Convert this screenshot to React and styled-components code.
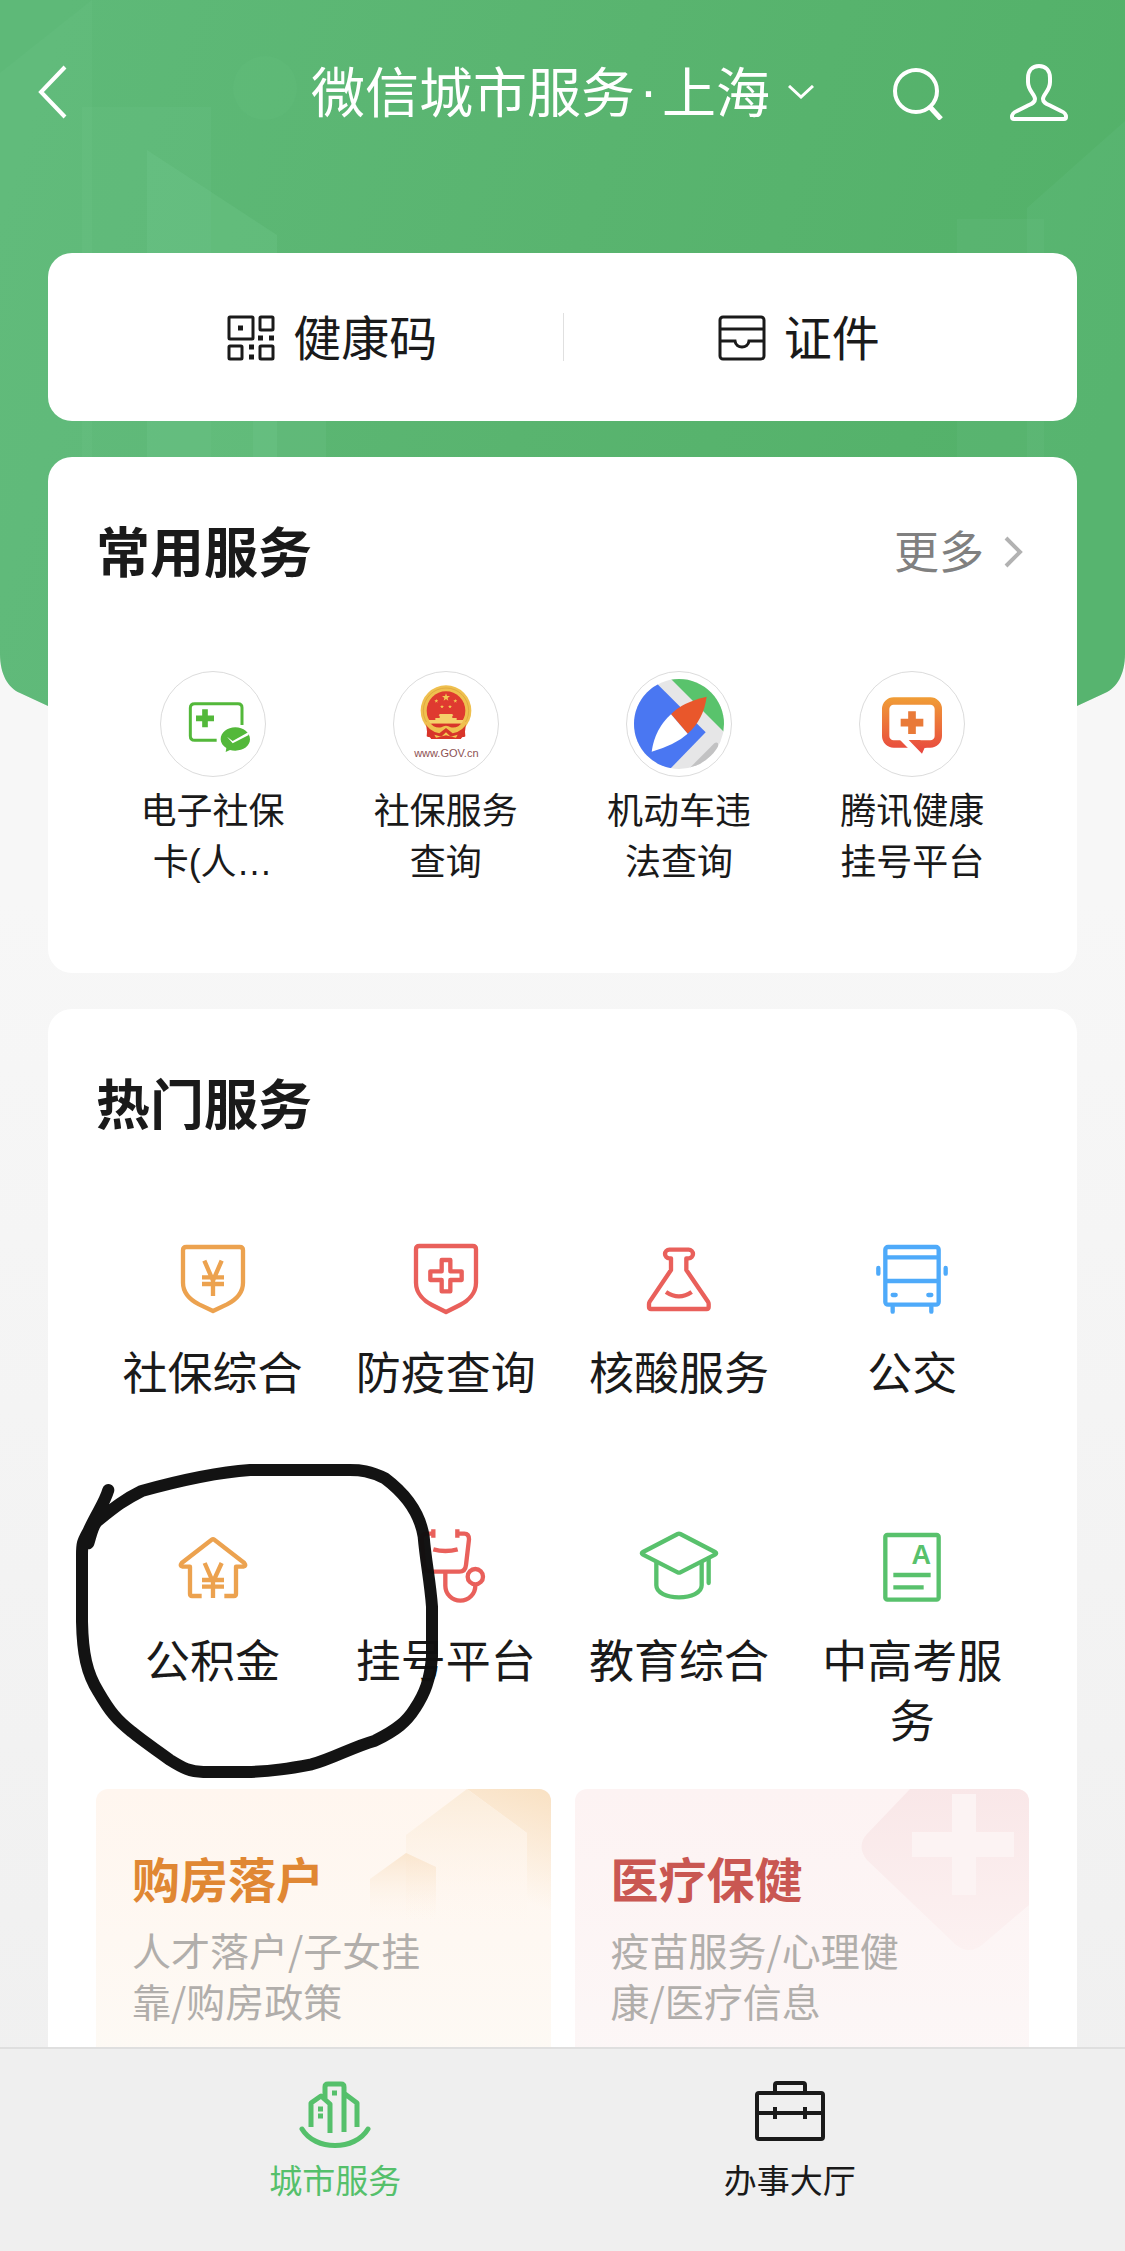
import React from 'react';
import styled, { createGlobalStyle } from 'styled-components';


const GlobalStyle = createGlobalStyle`
  * {
    box-sizing: border-box;
  }

  body {
    margin: 0;
    background: #f0f0f0;
    color: #1a1a1a;
    font-family: "Noto Sans CJK SC", "Noto Sans", sans-serif;
  }

  h1, h2, h3, p, ul {
    margin: 0;
    padding: 0;
  }

  button {
    padding: 0;
    border: 0;
    background: none;
    color: inherit;
    font: inherit;
    cursor: pointer;
  }

  a {
    color: inherit;
    text-decoration: none;
  }

  svg {
    display: block;
    flex: none;
  }
`;

const Page = styled.div`
  position: relative;
  display: flex;
  flex-direction: column;
  height: 100vh;
  overflow: hidden;
  background: linear-gradient(#f7f7f7 40%, #efefef);
`;

const Backdrop = styled.svg`
  position: absolute;
  top: 0;
  left: 0;
  width: 100%;
  height: 720px;
`;

const Scroll = styled.main`
  position: relative;
  flex: 1;
  min-height: 0;
  overflow: hidden;
  padding: 0 48px;
`;

const Header = styled.header`
  display: grid;
  grid-template-columns: 1fr auto 1fr;
  align-items: center;
  height: 184px;
  margin-bottom: 69px;
  color: #fff;
`;

const BackButton = styled.button`
  justify-self: start;
  margin-left: -12px;
`;

const CityButton = styled.button`
  display: flex;
  align-items: center;
  gap: 18px;
`;

const PageTitle = styled.h1`
  display: flex;
  padding-bottom: 5px;
  font-size: 54px;
  font-weight: 400;
  line-height: 72px;
`;

const Dot = styled.span`
  width: 27px;
  font-family: "Liberation Sans", sans-serif;
  text-align: center;
`;

const Actions = styled.div`
  display: flex;
  align-items: center;
  justify-content: flex-end;
  gap: 66px;
  padding-right: 8px;
`;

const Card = styled.section`
  position: relative;
  margin-bottom: 36px;
  border-radius: 24px;
  background: #fff;
`;

const QuickCard = styled(Card)`
  display: flex;
  align-items: center;
  height: 168px;
  padding: 0 48px;
`;

const QuickLink = styled.a`
  flex: 1;
  display: flex;
  align-items: center;
  justify-content: center;
  gap: 18px;
  padding-left: 6px;
  font-size: 48px;
  line-height: 72px;

  & + & {
    background: linear-gradient(#e0e0e0, #e0e0e0) left center / 1px 48px no-repeat;
  }
`;

const QuickLabel = styled.span`
  padding-bottom: 5px;
`;

const CommonCard = styled(Card)`
  height: 516px;
  padding: 0 48px;
`;

const HotCard = styled(Card)`
  padding: 0 48px 60px;
`;

const CardHead = styled.div`
  display: flex;
  align-items: center;
  justify-content: space-between;
  height: 190px;
`;

const CardTitle = styled.h2`
  padding-bottom: 4px;
  font-size: 54px;
  font-weight: 700;
  line-height: 72px;
`;

const MoreLink = styled.a`
  display: flex;
  align-items: center;
  gap: 18px;
  padding-right: 3px;
  color: #808080;
  font-size: 45px;
  line-height: 60px;
`;

const MoreLabel = styled.span`
  padding-bottom: 4px;
`;

const Grid = styled.ul`
  display: grid;
  grid-template-columns: repeat(4, 1fr);
  list-style: none;
`;

const CommonGrid = styled(Grid)`
  padding-top: 24px;
`;

const HotGrid = styled(Grid)`
  row-gap: 121px;
  padding: 35px 0 40px;
`;

/* the Latin face comes first so that the ellipsis sits on the baseline */
const CommonItem = styled.a`
  display: flex;
  flex-direction: column;
  align-items: center;
  gap: 9px;
  font-family: "Liberation Sans", "Noto Sans CJK SC", sans-serif;
  font-size: 36px;
  line-height: 51px;
  text-align: center;
`;

const Round = styled.span`
  width: 106px;
  height: 106px;
  border: 1px solid #dcdcdc;
  border-radius: 50%;
  overflow: hidden;
`;

const CommonLabel = styled.span`
  width: 150px;
`;

const HotItem = styled.a`
  display: flex;
  flex-direction: column;
  align-items: center;
  gap: 17px;
  padding: 0 12px;
  font-size: 45px;
  line-height: 60px;
  text-align: center;
`;

const Features = styled.div`
  display: grid;
  grid-template-columns: 1fr 1fr;
  gap: 24px;
`;

const Feature = styled.a`
  position: relative;
  height: 300px;
  padding: 52px 108px 0 36px;
  border-radius: 12px;
  overflow: hidden;
  background: ${props => props.$background};
`;

const FeatureArt = styled.svg`
  position: absolute;
  top: 0;
  right: 0;
`;

const FeatureTitle = styled.h3`
  position: relative;
  margin-bottom: 11px;
  color: ${props => props.$color};
  font-size: 48px;
  font-weight: 700;
  line-height: 72px;
`;

const FeatureText = styled.p`
  position: relative;
  color: #b1aeab;
  font-size: 39px;
  line-height: 51px;
`;

const HandCircle = styled.svg`
  position: absolute;
  top: 431px;
  left: 12px;
  pointer-events: none;
`;

const TabBar = styled.nav`
  position: relative;
  display: flex;
  height: 204px;
  padding: 30px 108px 0;
  border-top: 2px solid #dfdfdf;
  background: #efefef;
`;

const Tab = styled.a`
  flex: 1;
  display: flex;
  flex-direction: column;
  align-items: center;
  gap: 4px;
  color: ${props => (props.$active ? '#55c06b' : '#1a1a1a')};
  font-size: 33px;
  line-height: 48px;
`;


// icons in the hot services grid share a 270 unit canvas
const LineIcon = ({ color, children }) => (
  <svg width="90" height="90" viewBox="0 0 270 270" fill="none" stroke={color} strokeWidth="13" strokeLinejoin="round" aria-hidden="true">
    {children}
  </svg>
);

const InsuranceIcon = () => (
  <LineIcon color="#eca24f">
    <path d="M55 39H215Q225 39 225 49V146C225 178 200 199 177 211L135 231L93 211C70 199 45 178 45 146V49Q45 39 55 39Z" />
    <path d="M109 80L135 140L161 80M135 134V186M102 130H168M102 150H168" strokeLinejoin="miter" />
  </LineIcon>
);

const EpidemicIcon = () => (
  <LineIcon color="#e9605b">
    <path d="M55 36H215Q225 36 225 46V146C225 178 200 201 177 213L135 234L93 213C70 201 45 178 45 146V46Q45 36 55 36Z" />
    <path d="M122 78H148V112H182V138H148V172H122V138H88V112H122Z" />
  </LineIcon>
);

const FlaskIcon = () => (
  <LineIcon color="#e9605b">
    <path d="M111 108V73H106A13 13 0 0 1 106 47H164A13 13 0 0 1 164 73H157V108L222 203Q224 206 224 210V219Q224 225 218 225H51Q45 225 45 219V210Q45 206 47 203Z" />
    <path d="M96 174Q135 200 173 174" />
  </LineIcon>
);

const BusIcon = () => (
  <LineIcon color="#4eaafa">
    <rect x="55" y="39" width="160" height="173" rx="8" />
    <path d="M55 70H215M55 141H215" />
    <path d="M34 102V119M236 102V119M77 218V233M193 218V233M77 183H86M184 183H193" strokeLinecap="round" />
  </LineIcon>
);

const FundIcon = () => (
  <LineIcon color="#eca24f">
    <path d="M101 222H72Q66 222 66 216V134H44Q34 132 41 123L131 53Q135 50 139 53L229 123Q236 132 226 134H204V216Q204 222 198 222H169" />
    <path d="M110 123L135 180L161 123M135 176V228M102 174H168M102 194H168" strokeLinejoin="miter" />
  </LineIcon>
);

const StethoscopeIcon = () => (
  <LineIcon color="#e9605b">
    <path d="M97 22V47M169 22V47M97 35H76Q62 35 62 52L70 129Q72 149 91 149H175Q193 149 195 129L204 52Q204 35 190 35H169M97 82Q133 92 170 82M133 149V191A45 45 0 0 0 223 191" />
    <circle cx="223" cy="164" r="23" />
  </LineIcon>
);

const EducationIcon = () => (
  <LineIcon color="#58c16c">
    <path d="M131 36Q135 34 139 36L243 90Q250 94 243 98L139 151Q135 153 131 151L27 98Q20 94 27 90Z" />
    <path d="M67 121V190C67 212 98 226 135 226S203 212 203 190V121" />
    <path d="M224 110V183" strokeLinecap="round" />
  </LineIcon>
);

const ExamIcon = () => (
  <LineIcon color="#58c16c">
    <rect x="55" y="39" width="160" height="194" rx="6" />
    <path d="M79 159H191M79 196H170" />
    <text x="163" y="126" fill="#58c16c" stroke="none" fontFamily="Liberation Sans, sans-serif" fontSize="81" fontWeight="700" textAnchor="middle">A</text>
  </LineIcon>
);

const RoundIcon = ({ children }) => (
  <svg width="104" height="104" viewBox="0 0 312 312" fill="none" aria-hidden="true">
    {children}
  </svg>
);

const SocialCardIcon = () => (
  <RoundIcon>
    <path d="M167 205H101Q88 205 88 192V108Q88 95 101 95H231Q243 95 243 107V159" stroke="#53b83a" strokeWidth="9" />
    <path d="M132 112V166M105 139H159" stroke="#53b83a" strokeWidth="17" />
    <path d="M223 166C247 166 267 182 267 202S247 236 223 236Q214 236 207 234L194 240L196 228C186 222 179 213 179 202C179 182 199 166 223 166Z" fill="#53b83a" />
    <path d="M198 194L215 207L267 178L262 190L215 214Z" fill="#fff" />
  </RoundIcon>
);

const STAR = '0,-12 3,-4 12,-4 5,2 7,10 0,5 -7,10 -5,2 -12,-4 -3,-4';

const GovIcon = () => (
  <RoundIcon>
    <path d="M101 154L98 193Q104 196 108 194L112 201H200L204 194Q210 196 214 193L211 154Z" fill="#d8352a" />
    <circle cx="156" cy="116" r="76" fill="#efc04f" />
    <circle cx="156" cy="116" r="68" stroke="#d99f38" strokeWidth="2" />
    <circle cx="156" cy="116" r="58" fill="#df3a30" />
    <polygon points={STAR} transform="translate(156 76)" fill="#f3c752" />
    <polygon points={STAR} transform="translate(127 87) scale(0.5)" fill="#f3c752" />
    <polygon points={STAR} transform="translate(184 87) scale(0.5)" fill="#f3c752" />
    <polygon points={STAR} transform="translate(144 104) scale(0.5)" fill="#f3c752" />
    <polygon points={STAR} transform="translate(168 104) scale(0.5)" fill="#f3c752" />
    <path d="M137 126H175L178 131H175V138H188V144H208L204 155H108L104 144H124V138H137V131H134Z" fill="#f5d06a" />
    <path d="M96 155H216L211 194L204 196L200 201H112L108 196L101 194Z" fill="#d8352a" />
    <path d="M92 150Q104 178 136 184L156 168L176 184Q208 178 220 150L206 150Q192 170 170 166Q156 156 142 166Q120 170 106 150Z" fill="#efc04f" />
    <path d="M121 188L142 194L156 181L170 194L191 188L186 197L156 190L126 197Z" fill="#f3c752" />
    <text x="157" y="254" fill="#8d5152" fontFamily="Liberation Sans, sans-serif" fontSize="33" textAnchor="middle">www.GOV.cn</text>
  </RoundIcon>
);

const CompassIcon = () => (
  <RoundIcon>
    <clipPath id="compass">
      <circle cx="156" cy="156" r="135" />
    </clipPath>
    <g clipPath="url(#compass)">
      <rect width="312" height="312" fill="#e6e6e7" />
      <path d="M91 36L236 181L128 292H0V36Z" fill="#4a77f2" />
      <path d="M130 19L293 182V0H130Z" fill="#59c36c" />
      <path d="M184 292L262 214Q268 209 273 214V292Z" fill="#c2c2c3" />
    </g>
    <path d="M239 74Q230 142 182 185L132 127Q164 91 239 74Z" fill="#e9572b" />
    <path d="M132 127L182 185Q147 217 74 239Q84 170 132 127Z" fill="#fff" />
  </RoundIcon>
);

const HealthIcon = () => (
  <RoundIcon>
    <linearGradient id="health" gradientUnits="userSpaceOnUse" x1="0" y1="76" x2="0" y2="245">
      <stop offset="0" stopColor="#f09d36" />
      <stop offset="1" stopColor="#e8453f" />
    </linearGradient>
    <rect x="77" y="87" width="158" height="129" rx="24" stroke="url(#health)" strokeWidth="22" />
    <path d="M118 202L146 230H176L148 202Z" fill="#fff" />
    <path d="M146 204H180L200 227H194L186 245Z" fill="url(#health)" />
    <path d="M156 118V186M122 152H190" stroke="#e97a38" strokeWidth="23" />
  </RoundIcon>
);

const common = [
  { label: '电子社保卡(人…', Icon: SocialCardIcon },
  { label: '社保服务查询', Icon: GovIcon },
  { label: '机动车违法查询', Icon: CompassIcon },
  { label: '腾讯健康挂号平台', Icon: HealthIcon },
];

const hot = [
  { label: '社保综合', Icon: InsuranceIcon },
  { label: '防疫查询', Icon: EpidemicIcon },
  { label: '核酸服务', Icon: FlaskIcon },
  { label: '公交', Icon: BusIcon },
  { label: '公积金', Icon: FundIcon },
  { label: '挂号平台', Icon: StethoscopeIcon },
  { label: '教育综合', Icon: EducationIcon },
  { label: '中高考服务', Icon: ExamIcon },
];

/**
 * Green city skyline behind the header
 */
const Skyline = () => (
  <Backdrop viewBox="0 0 1125 720" preserveAspectRatio="none" aria-hidden="true">
    <defs>
      <linearGradient id="green" x1="0" y1="0.3" x2="1" y2="0.5">
        <stop offset="0" stopColor="#5eb978" />
        <stop offset="0.5" stopColor="#59b46f" />
        <stop offset="1" stopColor="#53b169" />
      </linearGradient>
      <clipPath id="hero">
        <path d="M0 0H1125V654C1125 674 1117 688 1105 693L1077 706V720H48V706L20 693C8 688 0 674 0 654Z" />
      </clipPath>
    </defs>
    <g clipPath="url(#hero)">
      <rect width="1125" height="720" fill="url(#green)" />
      <g fill="#7fd09a">
        <path d="M0 73L92 0V720H0Z" opacity="0.1" />
        <path d="M82 107H211V720H82Z" opacity="0.11" />
        <path d="M147 150L277 235V720H147Z" opacity="0.18" />
        <path d="M253 380H326V720H253Z" opacity="0.16" />
        <circle cx="265" cy="88" r="32" opacity="0.07" />
        <path d="M1027 208L1125 121V720H1027Z" opacity="0.12" />
        <path d="M957 219H1044V720H957Z" opacity="0.1" />
      </g>
    </g>
  </Backdrop>
);

const HousingArt = () => (
  <FeatureArt width="454" height="170" viewBox="0 0 454 170" aria-hidden="true">
    <defs>
      <linearGradient id="sun" x1="0.8" y1="0" x2="0.6" y2="1">
        <stop offset="0" stopColor="#f9e2c5" />
        <stop offset="0.8" stopColor="#f9e2c5" stopOpacity="0" />
      </linearGradient>
      <linearGradient id="house" x1="0" y1="0" x2="0" y2="1">
        <stop offset="0" stopColor="#fbecd9" />
        <stop offset="1" stopColor="#fff6ef" stopOpacity="0" />
      </linearGradient>
      <linearGradient id="hut" x1="0" y1="0" x2="0" y2="1">
        <stop offset="0" stopColor="#fae6cf" />
        <stop offset="0.9" stopColor="#fef5ec" stopOpacity="0" />
      </linearGradient>
    </defs>
    <path d="M370 0H454V140H430V44Z" fill="url(#sun)" />
    <path d="M370 0L430 44V135H309V46Z" fill="url(#house)" />
    <path d="M309 64L339 78V139H273V90Z" fill="url(#hut)" />
    <path d="M309 64L339 78V139H309Z" fill="url(#hut)" opacity="0.4" />
  </FeatureArt>
);

const MedicalArt = () => (
  <FeatureArt width="454" height="170" viewBox="0 0 454 170" aria-hidden="true">
    <defs>
      <linearGradient id="rose" x1="0" y1="0" x2="0" y2="1">
        <stop offset="0" stopColor="#f9e7e8" />
        <stop offset="1" stopColor="#fcf1f1" />
      </linearGradient>
    </defs>
    <path d="M335 0H454V116L407 156Q394 166 381 156L292 71Q281 57 292 45Z" fill="url(#rose)" />
    <path d="M377 5H401V43H439V68H401V106H377V68H337V43H377Z" fill="#fcf3f3" />
  </FeatureArt>
);

/**
 * City services home
 * @return {*}
 * @constructor
 */
const App = () => (
  <Page>
    <GlobalStyle />
    <Skyline />

    <Scroll>
      <Header>
        <BackButton type="button" aria-label="返回">
          <svg width="36" height="60" viewBox="0 0 36 60" fill="none" stroke="currentColor" strokeWidth="4">
            <path d="M29 5L5 30L29 55" />
          </svg>
        </BackButton>
        <CityButton type="button">
          <PageTitle>微信城市服务<Dot>·</Dot>上海</PageTitle>
          <svg width="26" height="14" viewBox="0 0 26 14" fill="none" stroke="currentColor" strokeWidth="3" aria-hidden="true">
            <path d="M1 1L13 12L25 1" />
          </svg>
        </CityButton>
        <Actions>
          <button type="button" aria-label="搜索">
            <svg width="52" height="56" viewBox="0 0 52 56" fill="none" stroke="currentColor" strokeWidth="4">
              <circle cx="25" cy="27" r="21" />
              <path d="M39 43L50 55" strokeWidth="5" />
            </svg>
          </button>
          <button type="button" aria-label="我的">
            <svg width="60" height="60" viewBox="0 0 60 60" fill="none" stroke="currentColor" strokeWidth="4" strokeLinejoin="round">
              <path d="M30 4C37 4 41 9 41 16V20C41 29 34 32 34 37C34 41 38 42 42 44L52 49C57 51 57 53 57 55Q57 57 55 57H5Q3 57 3 55C3 53 3 51 8 49L18 44C22 42 26 41 26 37C26 32 19 29 19 20V16C19 9 23 4 30 4Z" />
            </svg>
          </button>
        </Actions>
      </Header>

      <QuickCard>
        <QuickLink href="#code">
          <svg width="48" height="48" viewBox="0 0 48 48" fill="none" stroke="currentColor" strokeWidth="3" aria-hidden="true">
            <rect x="2" y="4" width="24" height="22" rx="1" />
            <rect x="33" y="4" width="13" height="13" rx="1" />
            <rect x="2" y="33" width="13" height="13" rx="1" />
            <rect x="33" y="33" width="13" height="13" rx="1" />
            <path d="M11 15H16M31 25H36M42 25H47M22 34H27M22 44H27" strokeWidth="5" />
          </svg>
          <QuickLabel>健康码</QuickLabel>
        </QuickLink>
        <QuickLink href="#license">
          <svg width="48" height="48" viewBox="0 0 48 48" fill="none" stroke="currentColor" strokeWidth="3" aria-hidden="true">
            <rect x="2" y="4" width="44" height="42" rx="3" />
            <path d="M2 16H46M2 28H17C18 36 30 36 31 28H46" />
          </svg>
          <QuickLabel>证件</QuickLabel>
        </QuickLink>
      </QuickCard>

      <CommonCard>
        <CardHead>
          <CardTitle>常用服务</CardTitle>
          <MoreLink href="#more">
            <MoreLabel>更多</MoreLabel>
            <svg width="24" height="36" viewBox="0 0 24 36" fill="none" stroke="#b2b2b2" strokeWidth="4" aria-hidden="true">
              <path d="M4 4L18 18L4 32" />
            </svg>
          </MoreLink>
        </CardHead>
        <CommonGrid>
          {common.map(({ label, Icon }) => (
            <li key={label}>
              <CommonItem href="#service">
                <Round><Icon /></Round>
                <CommonLabel>{label}</CommonLabel>
              </CommonItem>
            </li>
          ))}
        </CommonGrid>
      </CommonCard>

      <HotCard>
        <CardHead>
          <CardTitle>热门服务</CardTitle>
        </CardHead>
        <HotGrid>
          {hot.map(({ label, Icon }) => (
            <li key={label}>
              <HotItem href="#service">
                <Icon />
                {label}
              </HotItem>
            </li>
          ))}
        </HotGrid>
        <Features>
          <Feature href="#housing" $background="linear-gradient(#fff6ef, #fdfaf5)">
            <HousingArt />
            <FeatureTitle $color="#e08733">购房落户</FeatureTitle>
            <FeatureText>人才落户/子女挂靠/购房政策</FeatureText>
          </Feature>
          <Feature href="#medical" $background="linear-gradient(#fdf3f3, #fcf7f7)">
            <MedicalArt />
            <FeatureTitle $color="#c95752">医疗保健</FeatureTitle>
            <FeatureText>疫苗服务/心理健康/医疗信息</FeatureText>
          </Feature>
        </Features>
        <HandCircle width="500" height="360" viewBox="0 0 1500 1080" fill="none" stroke="#0f0f0f" strokeWidth="36" strokeLinecap="round" strokeLinejoin="round" opacity="0.98" aria-hidden="true">
          <path d="M145 150C134 188 112 216 86 272C70 303 66 305 66 345V545C68 640 80 700 115 755C150 815 170 840 215 875C255 908 290 930 330 960C370 985 390 995 430 996H560C640 994 690 985 755 973C820 955 880 920 945 902C1010 870 1040 845 1065 805C1095 760 1110 720 1116 650V500C1110 420 1098 370 1091 290C1080 220 1035 160 975 115C930 92 900 90 870 90H570C500 95 400 110 245 153C190 180 160 205 110 245C95 265 92 290 85 310" />
        </HandCircle>
      </HotCard>
    </Scroll>

    <TabBar>
      <Tab href="#city" $active>
        <svg width="72" height="72" viewBox="0 0 72 72" fill="none" stroke="currentColor" strokeWidth="5" strokeLinejoin="round" aria-hidden="true">
          <path d="M3 50C16 72 56 72 69 50" strokeLinecap="round" />
          <path d="M12 48V24L22 17L31 25V54M26 20V8Q26 5 29 5H42Q45 5 45 8V53M46 15L58 24V48" />
          <path d="M33 14H38M19 30H24M19 37H24" />
        </svg>
        城市服务
      </Tab>
      <Tab href="#hall">
        <svg width="72" height="72" viewBox="0 0 72 72" fill="none" stroke="currentColor" strokeWidth="4" strokeLinejoin="round" aria-hidden="true">
          <rect x="3" y="14" width="66" height="46" rx="2" />
          <path d="M21 14V6Q21 4 23 4H49Q51 4 51 6V14M3 34H69M21 28V40M51 28V40" />
        </svg>
        办事大厅
      </Tab>
    </TabBar>
  </Page>
);

export default App;
